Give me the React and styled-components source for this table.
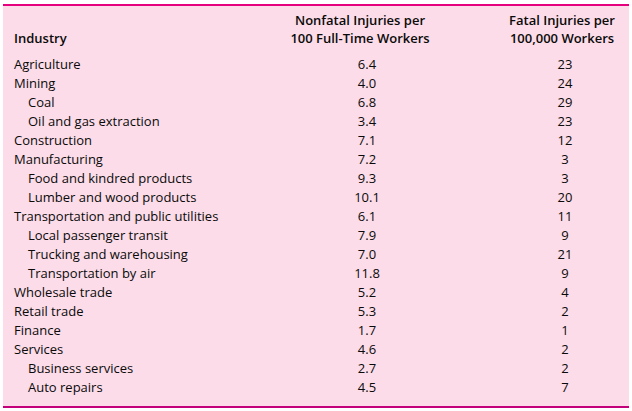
import React from "react";
import styled, { createGlobalStyle } from "styled-components";

const Global = createGlobalStyle`
  html, body { margin: 0; padding: 0; background: #ffffff; }
  body { font-family: "Open Sans", Lato, sans-serif; color: #0a0a0a; }
`;

const Panel = styled.div`
  margin: 4px 0 0 3px;
  width: 626px;
  height: 404px;
  box-sizing: border-box;
  background: #fcdce8;
  border-top: 2px solid #e5007d;
  border-bottom: 2px solid #c4007a;
  padding: 5px 0 0 0;
`;

const Table = styled.table`
  border-collapse: collapse;
  width: 100%;
  font-size: 13px;
  table-layout: fixed;
`;

const HeadCell = styled.th`
  font-weight: 600;
  line-height: 18px;
  vertical-align: bottom;
  text-align: ${p => (p.$left ? "left" : "center")};
  padding: 0 0 8px ${p => (p.$left ? "11px" : "0")};
  width: ${p => p.$w || "auto"};
`;

const Cell = styled.td`
  line-height: 19px;
  height: 19px;
  padding: 0 0 0 ${p => (p.$indent ? "25px" : p.$first ? "11px" : p.$pl || "0")};
  text-align: ${p => (p.$first ? "left" : "center")};
  white-space: nowrap;
`;

const rows = [
  ["Agriculture", 0, "6.4", "23"],
  ["Mining", 0, "4.0", "24"],
  ["Coal", 1, "6.8", "29"],
  ["Oil and gas extraction", 1, "3.4", "23"],
  ["Construction", 0, "7.1", "12"],
  ["Manufacturing", 0, "7.2", "3"],
  ["Food and kindred products", 1, "9.3", "3"],
  ["Lumber and wood products", 1, "10.1", "20"],
  ["Transportation and public utilities", 0, "6.1", "11"],
  ["Local passenger transit", 1, "7.9", "9"],
  ["Trucking and warehousing", 1, "7.0", "21"],
  ["Transportation by air", 1, "11.8", "9"],
  ["Wholesale trade", 0, "5.2", "4"],
  ["Retail trade", 0, "5.3", "2"],
  ["Finance", 0, "1.7", "1"],
  ["Services", 0, "4.6", "2"],
  ["Business services", 1, "2.7", "2"],
  ["Auto repairs", 1, "4.5", "7"],
];

export default function App() {
  return (
    <>
      <Global />
      <Panel>
        <Table>
          <thead>
            <tr>
              <HeadCell $left $w="211px">Industry</HeadCell>
              <HeadCell $w="270px">
                Nonfatal Injuries per
                <br />
                100 Full-Time Workers
              </HeadCell>
              <HeadCell>
                Fatal Injuries per
                <br />
                100,000 Workers
              </HeadCell>
            </tr>
          </thead>
          <tbody>
            {rows.map(([name, ind, a, b]) => (
              <tr key={name}>
                <Cell $first $indent={ind === 1}>{name}</Cell>
                <Cell $pl="14px">{a}</Cell>
                <Cell $pl="6px">{b}</Cell>
              </tr>
            ))}
          </tbody>
        </Table>
      </Panel>
    </>
  );
}
